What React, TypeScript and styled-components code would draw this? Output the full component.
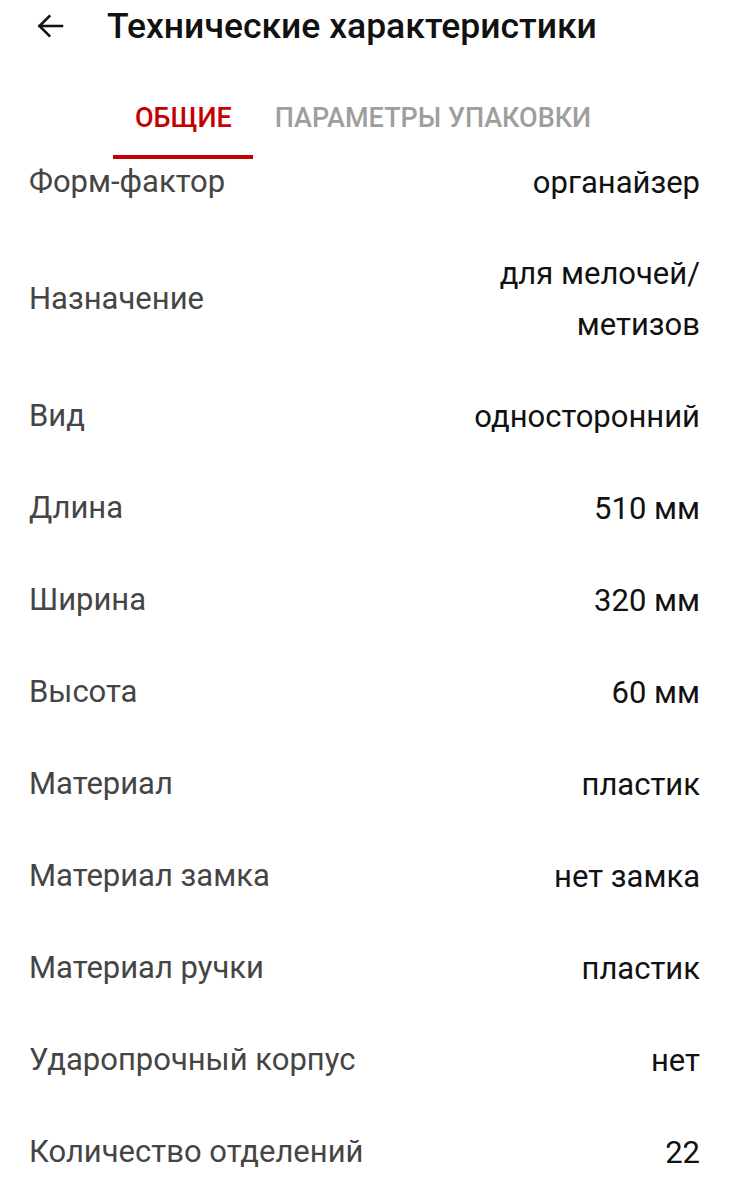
import React from "react";
import styled, { createGlobalStyle } from "styled-components";

const Global = createGlobalStyle`
  html, body { margin: 0; padding: 0; background: #fff; }
  body { font-family: Roboto, "Noto Sans", sans-serif; -webkit-font-smoothing: antialiased; }
`;

const Page = styled.div`
  width: 729px;
  display: flex;
  flex-direction: column;
`;

const Header = styled.header`
  height: 52px;
  display: flex;
  align-items: center;
  padding-left: 32px;
  gap: 39px;
`;

const BackButton = styled.button`
  width: 36px;
  height: 36px;
  padding: 0;
  border: 0;
  background: none;
  display: flex;
  align-items: center;
  justify-content: center;
  color: #111;
`;

const Title = styled.h1`
  margin: 0;
  font-size: 35.5px;
  font-weight: 500;
  color: #111;
`;

const Tabs = styled.nav`
  display: flex;
  padding-left: 113px;
  margin-top: 40px;
`;

const Tab = styled.div<{ $active?: boolean }>`
  padding: 12px 21px 23px 22px;
  height: 67px;
  box-sizing: border-box;
  font-size: 27px;
  line-height: 28px;
  font-weight: 500;
  text-transform: uppercase;
  color: ${(p) => (p.$active ? "#c40000" : "#9e9e9e")};
  border-bottom: 4px solid ${(p) => (p.$active ? "#c40000" : "transparent")};
`;

const List = styled.div`
  display: flex;
  flex-direction: column;
  padding: 0 29px;
  margin-top: -23px;
`;

const Row = styled.div`
  display: flex;
  justify-content: space-between;
  align-items: center;
  padding: 20px 0;
  gap: 24px;
`;

const Label = styled.div`
  font-size: 31px;
  line-height: 52px;
  color: #454545;
`;

const Value = styled.div`
  font-size: 31px;
  line-height: 51px;
  color: #111;
  text-align: right;
  max-width: 240px;
`;

const specs: [string, string][] = [
  ["Форм-фактор", "органайзер"],
  ["Назначение", "для мелочей/ метизов"],
  ["Вид", "односторонний"],
  ["Длина", "510 мм"],
  ["Ширина", "320 мм"],
  ["Высота", "60 мм"],
  ["Материал", "пластик"],
  ["Материал замка", "нет замка"],
  ["Материал ручки", "пластик"],
  ["Ударопрочный корпус", "нет"],
  ["Количество отделений", "22"],
];

export default function App() {
  return (
    <Page>
      <Global />
      <Header>
        <BackButton aria-label="Назад">
          <svg width="36" height="36" viewBox="0 0 24 24" fill="none" stroke="currentColor" strokeWidth="1.7" strokeLinecap="square">
            <path d="M20 12H5" />
            <path d="M11.5 5.5L5 12l6.5 6.5" />
          </svg>
        </BackButton>
        <Title>Технические характеристики</Title>
      </Header>
      <Tabs>
        <Tab $active>Общие</Tab>
        <Tab>Параметры упаковки</Tab>
      </Tabs>
      <List>
        {specs.map(([l, v]) => (
          <Row key={l}>
            <Label>{l}</Label>
            <Value>{v}</Value>
          </Row>
        ))}
      </List>
    </Page>
  );
}
